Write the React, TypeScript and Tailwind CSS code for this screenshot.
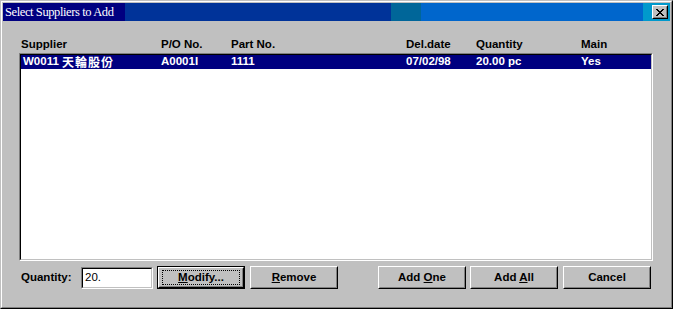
import React from "react";

const sans = { fontFamily: '"Liberation Sans", Arial, "Noto Sans CJK TC", sans-serif' };

function Raised({ children, className = "" }: { children: React.ReactNode; className?: string }) {
  return (
    <div className={"border border-t-white border-l-white border-b-black border-r-black bg-[#c0c0c0] " + className}>
      <div className="w-full h-full border border-t-[#c0c0c0] border-l-[#c0c0c0] border-b-[#808080] border-r-[#808080] flex items-center justify-center">
        {children}
      </div>
    </div>
  );
}

function Btn({ children, def = false, className = "" }: { children: React.ReactNode; def?: boolean; className?: string }) {
  if (def) {
    return (
      <div className={"w-[88px] h-[23px] border border-black " + className}>
        <Raised className="w-full h-full">
          <div className="border border-dotted border-black w-[78px] h-[15px] flex items-center justify-center text-[11.5px] font-bold text-black leading-none">
            {children}
          </div>
        </Raised>
      </div>
    );
  }
  return (
    <Raised className={"w-[88px] h-[23px] " + className}>
      <span className="text-[11.5px] font-bold text-black leading-none">{children}</span>
    </Raised>
  );
}

function CloseX() {
  return (
    <svg width="8" height="7" viewBox="0 0 8 7" shapeRendering="crispEdges">
      <path
        d="M0 0h2v1H0zM6 0h2v1H6zM1 1h2v1H1zM5 1h2v1H5zM2 2h4v1H2zM3 3h2v1H3zM2 4h4v1H2zM1 5h2v1H1zM5 5h2v1H5zM0 6h2v1H0zM6 6h2v1H6z"
        fill="#000"
      />
    </svg>
  );
}

export default function App() {
  return (
    <div style={sans} className="w-[673px] h-[309px] bg-[#c0c0c0]">
      <div className="w-full h-full border border-t-[#c0c0c0] border-l-[#c0c0c0] border-b-black border-r-black">
        <div className="w-full h-full border border-t-white border-l-white border-b-[#808080] border-r-[#808080] p-px flex flex-col">
          {/* Title bar */}
          <div className="h-[18px] flex items-center justify-between pl-[2px] pr-[2px] bg-[linear-gradient(to_right,#000080_0px,#000080_122px,#003399_122px,#003399_388px,#006699_388px,#006699_418px,#0066cc_418px,#0066cc_640px,#0099cc_640px,#0099cc_667px)]">
            <span
              className="text-white text-[12.5px] leading-none tracking-[-0.4px]"
              style={{ fontFamily: '"Liberation Serif", "Times New Roman", serif' }}
            >
              Select Suppliers to Add
            </span>
            <Raised className="w-[16px] h-[14px]">
              <CloseX />
            </Raised>
          </div>

          {/* Body */}
          <div className="flex-1 pl-[16px] flex flex-col">
            <div className="mt-[17px] h-[13px] flex pl-[2px] text-[11.5px] font-bold text-black leading-[13px]">
              <div className="w-[140px]">Supplier</div>
              <div className="w-[70px]">P/O No.</div>
              <div className="w-[175px]">Part No.</div>
              <div className="w-[70px]">Del.date</div>
              <div className="w-[105px]">Quantity</div>
              <div>Main</div>
            </div>

            <div className="mt-[2px] w-[634px] h-[208px] border border-t-[#808080] border-l-[#808080] border-b-white border-r-white">
              <div className="w-full h-full border border-t-black border-l-black border-b-[#c0c0c0] border-r-[#c0c0c0] bg-white">
                <div className="h-[14px] flex items-center bg-[#000080] text-white text-[11.5px] font-bold leading-none">
                  <div className="w-[140px] pl-[2px] flex items-center">
                    W0011&nbsp;
                    <span
                      className="text-[12px] tracking-[1px]"
                      style={{ fontFamily: '"Noto Sans CJK TC", "Noto Sans CJK SC", sans-serif' }}
                    >
                      天輪股份
                    </span>
                  </div>
                  <div className="w-[70px]">A0001I</div>
                  <div className="w-[175px]">1111</div>
                  <div className="w-[70px]">07/02/98</div>
                  <div className="w-[105px]">20.00 pc</div>
                  <div>Yes</div>
                </div>
              </div>
            </div>

            <div className="mt-[5px] h-[23px] flex items-center">
              <div className="ml-[2px] w-[60px] text-[11.5px] font-bold text-black">Quantity:</div>
              <div className="w-[72px] h-[22px] border border-t-[#808080] border-l-[#808080] border-b-white border-r-white">
                <div className="w-full h-full border border-t-black border-l-black border-b-[#c0c0c0] border-r-[#c0c0c0] bg-white flex items-center pl-[2px] text-[11.5px] text-black">
                  20.
                </div>
              </div>
              <Btn def className="ml-[4px]">
                <span>
                  <u>M</u>odify...
                </span>
              </Btn>
              <Btn className="ml-[5px]">
                <u>R</u>emove
              </Btn>
              <Btn className="ml-[40px]">
                Add <u>O</u>ne
              </Btn>
              <Btn className="ml-[4px]">
                Add <u>A</u>ll
              </Btn>
              <Btn className="ml-[5px]">Cancel</Btn>
            </div>
          </div>
        </div>
      </div>
    </div>
  );
}
